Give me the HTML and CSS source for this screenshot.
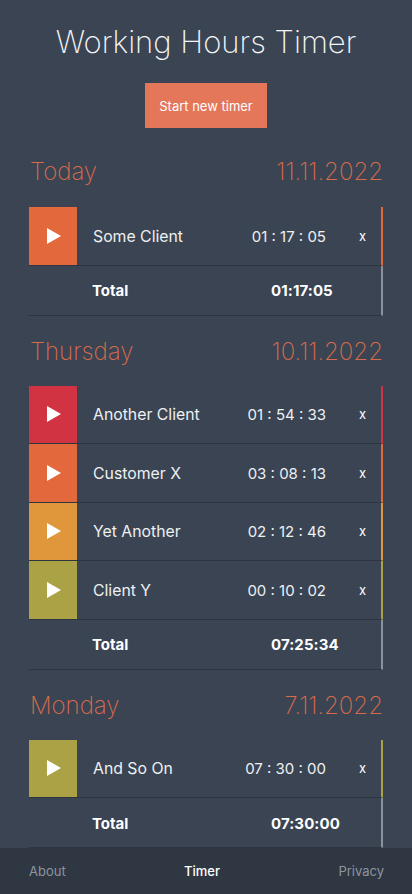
FILE: index.html
```html
<!DOCTYPE html>
<html lang="en">
<head>
<meta charset="utf-8">
<meta name="viewport" content="width=device-width, initial-scale=1">
<title>Working Hours Timer</title>
<link rel="stylesheet" href="styles.css">
</head>
<body>
<main class="page">
  <h1 class="title">Working Hours Timer</h1>
  <div class="actions"><button class="start-btn">Start new timer</button></div>

  <section class="day first">
    <div class="day-head"><span>Today</span><span>11.11.2022</span></div>
    <div class="entry c-orange">
      <div class="play"><svg width="14" height="16" viewBox="0 0 14 16"><path d="M0 0 L14 8 L0 16 Z" fill="#fff"/></svg></div>
      <div class="name">Some Client</div>
      <div class="time">01 : 17 : 05</div>
      <div class="del">x</div>
    </div>
    <div class="total"><span class="t-label">Total</span><span class="t-value">01:17:05</span></div>
  </section>

  <section class="day">
    <div class="day-head"><span>Thursday</span><span>10.11.2022</span></div>
    <div class="entry c-red">
      <div class="play"><svg width="14" height="16" viewBox="0 0 14 16"><path d="M0 0 L14 8 L0 16 Z" fill="#fff"/></svg></div>
      <div class="name">Another Client</div>
      <div class="time">01 : 54 : 33</div>
      <div class="del">x</div>
    </div>
    <div class="entry c-orange">
      <div class="play"><svg width="14" height="16" viewBox="0 0 14 16"><path d="M0 0 L14 8 L0 16 Z" fill="#fff"/></svg></div>
      <div class="name">Customer X</div>
      <div class="time">03 : 08 : 13</div>
      <div class="del">x</div>
    </div>
    <div class="entry c-amber">
      <div class="play"><svg width="14" height="16" viewBox="0 0 14 16"><path d="M0 0 L14 8 L0 16 Z" fill="#fff"/></svg></div>
      <div class="name">Yet Another</div>
      <div class="time">02 : 12 : 46</div>
      <div class="del">x</div>
    </div>
    <div class="entry c-olive">
      <div class="play"><svg width="14" height="16" viewBox="0 0 14 16"><path d="M0 0 L14 8 L0 16 Z" fill="#fff"/></svg></div>
      <div class="name">Client Y</div>
      <div class="time">00 : 10 : 02</div>
      <div class="del">x</div>
    </div>
    <div class="total"><span class="t-label">Total</span><span class="t-value">07:25:34</span></div>
  </section>

  <section class="day">
    <div class="day-head"><span>Monday</span><span>7.11.2022</span></div>
    <div class="entry c-olive">
      <div class="play"><svg width="14" height="16" viewBox="0 0 14 16"><path d="M0 0 L14 8 L0 16 Z" fill="#fff"/></svg></div>
      <div class="name">And So On</div>
      <div class="time">07 : 30 : 00</div>
      <div class="del">x</div>
    </div>
    <div class="total"><span class="t-label">Total</span><span class="t-value">07:30:00</span></div>
  </section>
</main>
<nav class="footer">
  <a class="f-link">About</a>
  <a class="f-link active">Timer</a>
  <a class="f-link">Privacy</a>
</nav>
</body>
</html>
```
FILE: styles.css
```css
* { box-sizing: border-box; }
html, body { margin: 0; padding: 0; }
body {
  background: #3a4453;
  font-family: Inter, "Noto Sans", sans-serif;
  color: #fff;
  height: 894px;
  overflow: hidden;
}
.page {
  padding: 0 29px 0 29px;
}
.title {
  margin: 0;
  padding-top: 22px;
  font-size: 31px;
  font-weight: 200;
  text-align: center;
  line-height: 40px;
  color: #f4f5f7;
}
.actions {
  display: flex;
  justify-content: center;
  margin-top: 21px;
}
.start-btn {
  background: #e4765a;
  color: #fff;
  border: 0;
  width: 122px;
  height: 45px;
  font-family: Inter, sans-serif;
  font-size: 13px;
  font-weight: 400;
  padding: 0;
}
.day-head {
  display: flex;
  justify-content: space-between;
  align-items: center;
  color: #d86b4b;
  font-size: 24px;
  font-weight: 200;
  line-height: 32px;
  padding: 20px 0 18px 1px;
  height: 70px;
}
.first .day-head { padding-top: 28px; padding-bottom: 19px; height: 79px; }
.entry {
  display: flex;
  align-items: center;
  height: 58.5px;
  border-bottom: 1px solid #2d3540;
  border-right: 2px solid;
}
.play {
  width: 48px;
  align-self: stretch;
  display: flex;
  align-items: center;
  justify-content: center;
  padding-left: 2px;
}
.name {
  flex: 1;
  padding-left: 16px;
  padding-top: 1px;
  font-size: 15.8px;
  color: #eef0f2;
}
.time {
  font-size: 15px;
  padding-top: 1px;
  color: #eef0f2;
  text-align: right;
}
.del {
  width: 55px;
  padding-left: 18px;
  text-align: center;
  font-size: 13px;
  color: #fff;
}
.c-red { border-right-color: #d13343; }
.c-red .play { background: #d13343; }
.c-orange { border-right-color: #e3693d; }
.c-orange .play { background: #e3693d; }
.c-amber { border-right-color: #e0963a; }
.c-amber .play { background: #e0963a; }
.c-olive { border-right-color: #aba246; }
.c-olive .play { background: #aba246; }
.total {
  display: flex;
  align-items: center;
  height: 50px;
  padding-top: 1px;
  border-bottom: 1px solid #2d3540;
  border-right: 2px solid #8a929c;
  font-weight: 700;
  font-size: 15px;
  color: #fff;
}
.t-label { width: 242px; padding-left: 63px; }
.t-value { letter-spacing: 0.1px; }
.footer {
  position: fixed;
  left: 0; right: 0; bottom: 0;
  height: 46px;
  background: #2f3743;
  display: flex;
  justify-content: space-between;
  align-items: center;
  padding: 0 28px 0 29px;
  font-size: 13px;
}
.f-link { color: #8d95a0; }
.f-link.active { color: #fff; font-weight: 500; }
```
